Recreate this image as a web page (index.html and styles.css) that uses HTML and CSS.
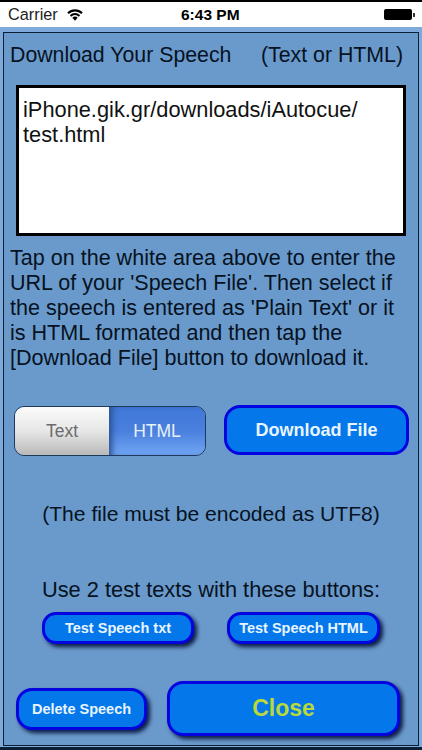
FILE: index.html
```html
<!DOCTYPE html>
<html lang="en">
<head>
    <meta charset="UTF-8">
    <meta name="viewport" content="width=device-width, initial-scale=1.0">
    <title>Download Your Speech</title>
    <link rel="stylesheet" href="styles.css">
</head>
<body>
    <div class="status-bar">
        <div class="status-left">
            <span>Carrier</span>
            <svg class="wifi" width="16" height="12" viewBox="0 0 16 12">
                <path d="M0.3 3.6 A10.8 10.8 0 0 1 15.7 3.6 L14.3 5.1 A8.8 8.8 0 0 0 1.7 5.1 Z" fill="#000"/>
                <path d="M2.8 6.2 A7.3 7.3 0 0 1 13.2 6.2 L11.8 7.7 A5.3 5.3 0 0 0 4.2 7.7 Z" fill="#000"/>
                <path d="M5.3 8.8 A3.8 3.8 0 0 1 10.7 8.8 L8 11.7 Z" fill="#000"/>
            </svg>
        </div>
        <div class="status-time">6:43 PM</div>
        <div class="battery"><div class="battery-body"></div><div class="battery-tip"></div></div>
    </div>

    <div class="page">
        <div class="panel">
            <div class="title-row">
                <span>Download Your Speech</span>
                <span>(Text or HTML)</span>
            </div>
            <div class="url-box">iPhone.gik.gr/downloads/iAutocue/<br>test.html</div>
            <p class="help">Tap on the white area above to enter the URL of your 'Speech File'. Then select if the speech is entered as 'Plain Text' or it is HTML formated and then tap the [Download File] button to download it.</p>

            <div class="download-row">
                <div class="segment">
                    <div class="seg-text">Text</div>
                    <div class="seg-html">HTML</div>
                </div>
                <button class="btn btn-download">Download File</button>
            </div>

            <p class="note">(The file must be encoded as UTF8)</p>
            <p class="test-label">Use 2 test texts with these buttons:</p>

            <div class="test-row">
                <button class="btn btn-test btn-txt">Test Speech txt</button>
                <button class="btn btn-test btn-html">Test Speech HTML</button>
            </div>

            <div class="bottom-row">
                <button class="btn btn-delete">Delete Speech</button>
                <button class="btn btn-close">Close</button>
            </div>
        </div>
    </div>
</body>
</html>
```

FILE: styles.css
```css
* {
    box-sizing: border-box;
}

body {
    margin: 0;
    width: 422px;
    height: 750px;
    overflow: hidden;
    font-family: "Liberation Sans", Arial, sans-serif;
    background-color: #0b2035;
    color: #000;
}

.status-bar {
    height: 27px;
    border-top: 2px solid #000;
    background-color: #fff;
    display: flex;
    align-items: center;
    justify-content: space-between;
    padding: 0 8px;
    position: relative;
    font-size: 16.3px;
}

.status-left {
    display: flex;
    align-items: center;
    gap: 9px;
    color: #222;
}

.status-time {
    position: absolute;
    left: 181px;
    top: 4px;
    font-weight: bold;
    font-size: 15.5px;
}

.battery {
    display: flex;
    align-items: center;
    margin-right: -1px;
}

.battery-body {
    width: 28px;
    height: 11px;
    background-color: #000;
    border-radius: 2px;
}

.battery-tip {
    width: 2px;
    height: 4px;
    margin-left: 1px;
    background-color: #333;
}

.page {
    height: 720px;
    padding: 5px 3px 0;
    background-color: #7eaadb;
}

.panel {
    height: 714px;
    border: 1px solid #0b2035;
    background-color: #6a9acb;
    padding: 0 12px;
}

.title-row {
    display: flex;
    justify-content: space-between;
    margin: 0 3px 0 -6px;
    padding-top: 9px;
    font-size: 21.3px;
    line-height: 26px;
    color: #06121f;
}

.url-box {
    height: 151px;
    margin-top: 17px;
    padding: 9px 4px;
    background-color: #fff;
    border: 3px solid #000;
    font-size: 21.8px;
    line-height: 25px;
    color: #111;
}

.help {
    margin: 9px -6px 0;
    font-size: 21.55px;
    line-height: 25px;
    color: #06121f;
}

.download-row {
    display: flex;
    justify-content: space-between;
    align-items: flex-start;
    margin: 35px -3px 0 -2px;
}

.segment {
    display: flex;
    width: 192px;
    height: 50px;
    margin-top: 1px;
    border: 1px solid #1d3a5c;
    border-radius: 10px;
    overflow: hidden;
    font-size: 17.5px;
}

.seg-text {
    width: 94px;
    display: flex;
    align-items: center;
    justify-content: center;
    color: #6c6c6c;
    background: linear-gradient(#fbfbfb, #e6e6e6 50%, #b9b9b9);
}

.seg-html {
    flex: 1;
    display: flex;
    align-items: center;
    justify-content: center;
    color: #e8f0fb;
    background: linear-gradient(#3f78d8, #4a80de 50%, #72a5f4);
    box-shadow: inset 6px 0 6px -3px #274f8f;
}

.btn {
    display: block;
    padding: 0;
    font-family: inherit;
    font-weight: bold;
    color: #e8f4ff;
    background-color: #0478eb;
    border: 3px solid #0404e0;
}

.btn-download {
    width: 185px;
    height: 50px;
    border-radius: 16px;
    font-size: 18px;
}

.note {
    margin: 45px 0 0;
    text-align: center;
    font-size: 21.1px;
    line-height: 26px;
    color: #06121f;
}

.test-label {
    margin: 50px 0 0;
    text-align: center;
    font-size: 21.8px;
    line-height: 26px;
    color: #06121f;
}

.test-row {
    display: flex;
    margin-top: 9px;
    padding-left: 26px;
    gap: 33px;
}

.btn-test,
.btn-delete,
.btn-close {
    box-shadow: 3px 3px 4px #0a1a44;
}

.btn-test {
    height: 32px;
    border-radius: 14px;
    font-size: 14.5px;
}

.btn-txt {
    width: 152px;
}

.btn-html {
    width: 153px;
}

.bottom-row {
    display: flex;
    align-items: center;
    gap: 20px;
    margin-top: 37px;
}

.btn-delete {
    width: 131px;
    height: 42px;
    border-radius: 16px;
    font-size: 14.5px;
}

.btn-close {
    width: 233px;
    height: 55px;
    border-radius: 16px;
    font-size: 23px;
    color: #b9d83a;
}
```
